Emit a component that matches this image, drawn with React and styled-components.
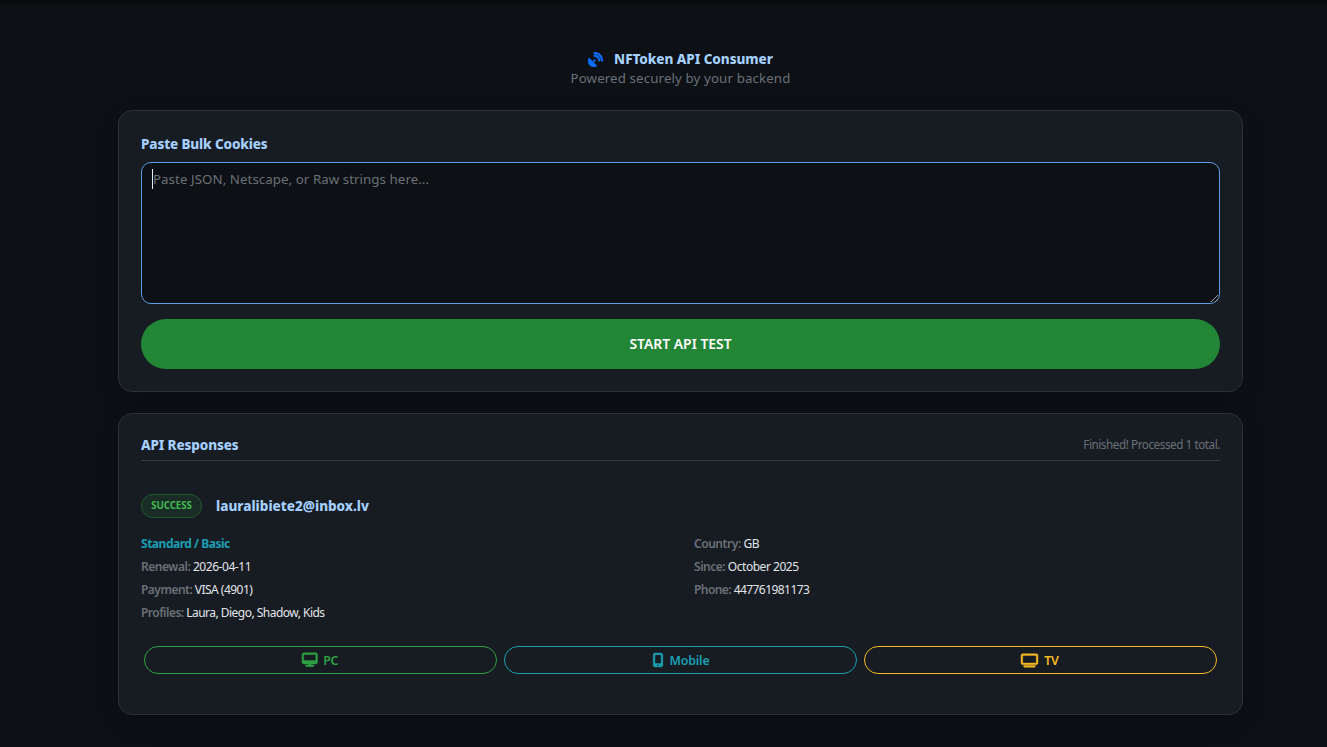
import React from 'react';
import styled, {createGlobalStyle} from 'styled-components';
import {FaSatelliteDish, FaDesktop, FaMobileScreenButton, FaTv} from 'react-icons/fa6';

const GlobalStyle = createGlobalStyle`
  * {
    box-sizing: border-box;
  }

  body {
    margin: 0;
    background: #0d1117;
    color: #e1e5e9;
    font-family: 'Segoe UI', 'Noto Sans', sans-serif;
    overflow: hidden;
  }
`;

const Page = styled.div`
  height: 747px;
  padding: 48px 84px 0 118px;
  background: linear-gradient(#08090d, #0d1015 8px, #0d1015);
`;

const Header = styled.header`
  display: flex;
  flex-direction: column;
  align-items: center;
  height: 62px;
`;

const Title = styled.h1`
  display: flex;
  align-items: center;
  gap: 11px;
  margin: 0;
  color: #a5d0ff;
  font-size: 13.5px;
  font-weight: 800;
  line-height: 22px;
  letter-spacing: -0.05px;

  svg {
    color: #0d6efd;
    font-size: 15px;
    stroke-width: 14px;
  }
`;

const Subtitle = styled.div`
  color: #6a7077;
  font-size: 13.3px;
  line-height: 17px;
  letter-spacing: 0.12px;
`;

const Card = styled.section`
  height: ${p => p.$height}px;
  margin-bottom: 21px;
  padding: 22px;
  border: 1px solid #2d3238;
  border-radius: 14px;
  background: #171c23;
  box-shadow: 0 8px 24px rgba(0, 0, 0, 0.2);
`;

const Label = styled.label`
  display: block;
  margin: 0;
  color: #a5d0ff;
  font-size: 13.5px;
  font-weight: 800;
  line-height: 22px;
  letter-spacing: ${p => p.$spacing}px;
`;

const CookieInput = styled.div`
  display: flex;
  justify-content: space-between;
  height: 142px;
  margin-top: 7px;
  padding: 6px 0 0 10px;
  border: 1px solid #5c9ce6;
  border-radius: 10px;
  background: #0d1014;
  color: #6a7077;
  font-size: 13.3px;
  line-height: 20px;
  letter-spacing: 0.06px;
`;

const Caret = styled.span`
  display: inline-block;
  width: 1px;
  height: 20px;
  background: #e6edf3;
  vertical-align: top;
`;

const ResizeHandle = styled.svg`
  align-self: flex-end;
  width: 9px;
  height: 9px;
`;

const StartButton = styled.button`
  display: block;
  width: 100%;
  height: 50px;
  margin-top: 15px;
  padding: 0 0 1px;
  border: 0;
  border-radius: 25px;
  background: #238636;
  color: #fff;
  font-family: inherit;
  font-size: 13.9px;
  font-weight: 600;
`;

const ResponsesHead = styled.div`
  display: flex;
  align-items: center;
  justify-content: space-between;
  height: 25px;
  padding-bottom: 7px;
  border-bottom: 1px solid #363b41;
  margin-bottom: 32px;
`;

const Status = styled.span`
  padding-bottom: 2px;
  color: #6a7077;
  font-size: 11.7px;
  letter-spacing: -0.44px;
`;

const Account = styled.div`
  display: flex;
  align-items: center;
  gap: 14px;
  height: 25px;
`;

const Badge = styled.span`
  width: 61px;
  height: 24px;
  border: 1px solid #23582f;
  border-radius: 12px;
  background: #192d26;
  color: #3fb950;
  font-size: 9.8px;
  font-weight: 700;
  line-height: 22px;
  letter-spacing: -0.15px;
  text-align: center;
`;

const Details = styled.div`
  display: grid;
  grid-template-columns: 1fr 1fr;
  column-gap: 27px;
  margin-top: 15px;
`;

const Detail = styled.div`
  height: 23px;
  line-height: 22px;
  font-size: 12px;
  white-space: nowrap;
  letter-spacing: ${p => p.$spacing}px;
`;

const Key = styled.b`
  color: #6a7077;
  font-weight: 600;
`;

const Plan = styled.b`
  color: #1b9fb3;
  font-weight: 700;
`;

const Devices = styled.div`
  display: flex;
  gap: 7px;
  margin-top: 21px;
  padding: 0 3px;
`;

const DeviceButton = styled.button`
  flex: 1;
  display: flex;
  align-items: center;
  justify-content: center;
  gap: ${p => p.$gap}px;
  height: 28px;
  padding: 0 1px 0 0;
  border: 1px solid ${p => p.$color};
  border-radius: 14px;
  background: transparent;
  color: ${p => p.$color};
  font-family: inherit;
  font-size: 12.4px;
  font-weight: 600;
  letter-spacing: -0.2px;

  svg {
    stroke-width: 16px;
    overflow: visible;
  }
`;

const leftDetails = [
  {name: 'Renewal', value: '2026-04-11', spacing: -0.45},
  {name: 'Payment', value: 'VISA (4901)', spacing: -0.52},
  {name: 'Profiles', value: 'Laura, Diego, Shadow, Kids', spacing: -0.52},
];

const rightDetails = [
  {name: 'Country', value: 'GB', spacing: -0.45},
  {name: 'Since', value: 'October 2025', spacing: -0.47},
  {name: 'Phone', value: '447761981173', spacing: -0.56},
];

const devices = [
  {name: 'PC', color: '#2ea043', icon: FaDesktop, size: 15.5, gap: 6},
  {name: 'Mobile', color: '#1b9fb3', icon: FaMobileScreenButton, size: 14, gap: 5},
  {name: 'TV', color: '#f5b921', icon: FaTv, size: 17, gap: 6},
];

const renderDetail = ({name, value, spacing}) => (
  <Detail key={name} $spacing={spacing}>
    <Key>{name}:</Key> {value}
  </Detail>
);

export default function App() {
  return (
    <Page>
      <GlobalStyle/>
      <Header>
        <Title><FaSatelliteDish/>NFToken API Consumer</Title>
        <Subtitle>Powered securely by your backend</Subtitle>
      </Header>
      <Card $height={282}>
        <Label $spacing={-0.14}>Paste Bulk Cookies</Label>
        <CookieInput>
          <span><Caret/>Paste JSON, Netscape, or Raw strings here...</span>
          <ResizeHandle viewBox="0 0 9 9" stroke="#a9adb2" strokeWidth="0.9">
            <path d="M1 8L8 1M5 8L8 5"/>
          </ResizeHandle>
        </CookieInput>
        <StartButton>START API TEST</StartButton>
      </Card>
      <Card $height={302}>
        <ResponsesHead>
          <Label as="h2" $spacing={-0.12}>API Responses</Label>
          <Status>Finished! Processed 1 total.</Status>
        </ResponsesHead>
        <Account>
          <Badge>SUCCESS</Badge>
          <Label as="span" $spacing={0}>lauralibiete2@inbox.lv</Label>
        </Account>
        <Details>
          <div>
            <Detail $spacing={-0.48}><Plan>Standard / Basic</Plan></Detail>
            {leftDetails.map(renderDetail)}
          </div>
          <div>{rightDetails.map(renderDetail)}</div>
        </Details>
        <Devices>
          {devices.map(({name, color, icon: Icon, size, gap}) =>
            <DeviceButton key={name} $color={color} $gap={gap}>
              <Icon size={size}/>{name}
            </DeviceButton>
          )}
        </Devices>
      </Card>
    </Page>
  );
}
